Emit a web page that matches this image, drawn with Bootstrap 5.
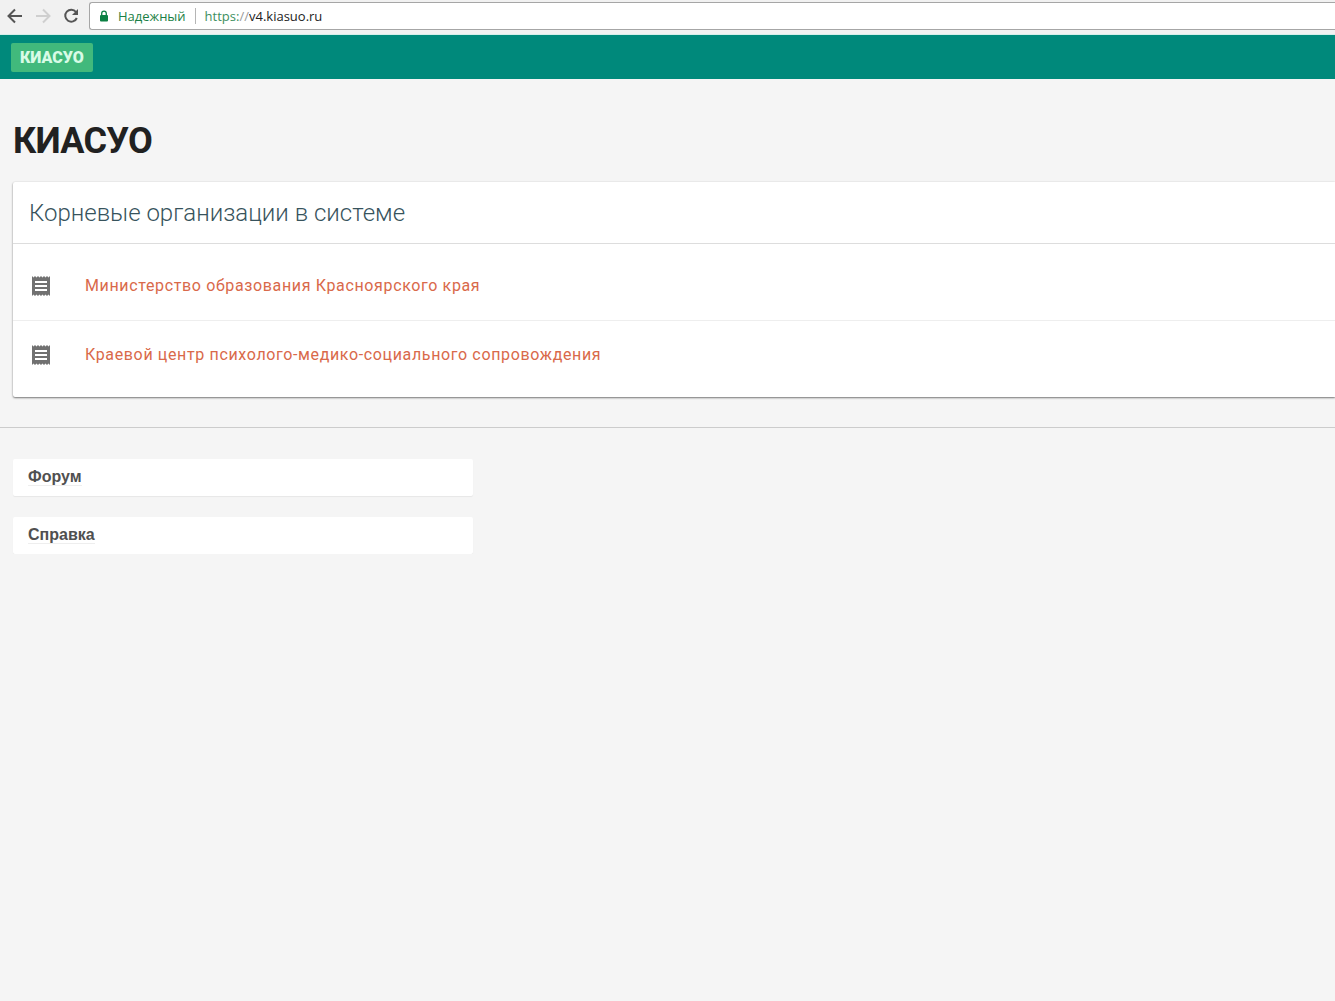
<!DOCTYPE html>
<html lang="ru">
<head>
<meta charset="utf-8">
<meta name="viewport" content="width=device-width, initial-scale=1">
<title>КИАСУО</title>
<link href="https://cdn.jsdelivr.net/npm/bootstrap@5.3.0/dist/css/bootstrap.min.css" rel="stylesheet">
<style>
body { background: #f5f5f5; color: #212121; font-family: Roboto, sans-serif; overflow-x: hidden; }
.browser-bar { background: #f1f1f1; height: 35px; padding: 2px 0 5px 6px; border-bottom: 1px solid #d5eee9; font: 13px/20px "Open Sans", sans-serif; }
.tool-group { gap: 10px; }
.tool-btn { width: 18px; height: 18px; color: #555; }
.tool-btn:disabled { color: #cfcfcf; opacity: 1; }
.tool-btn svg { display: block; }
.omnibox { height: 28px; border: 1px solid #a6a6a6; border-right: 0; border-radius: 3px 0 0 3px; background: #fff; padding-left: 9px; margin-left: 9px; }
.secure-text { color: #1a7f45; margin-left: 9px; }
.url-divider { width: 1px; height: 16px; background: #b5b5b5; margin: 0 9px; }
.url-scheme { color: #3d8f60; }
.url-slashes { color: #999; }
.url-input { color: #222; outline: 0; }
.app-bar { background: #00897b; height: 44px; padding: 0 11px; }
.brand-link { background: #41b97c; color: #d8fbe6; border-radius: 2px; padding: 5px 9px; font-size: 16px; line-height: 19px; font-weight: 900; }
.page-pad { padding-left: 13px; }
.page-title { font-size: 36px; line-height: 42px; font-weight: 700; letter-spacing: -.02em; margin: 0; padding: 41px 0 20px; }
.org-panel { border: 0; border-radius: 2px 0 0 2px; box-shadow: 0 1px 2px rgba(0,0,0,.5), 0 0 2px rgba(0,0,0,.08); }
.org-panel h2 { font-size: 24px; line-height: 29px; font-weight: 300; color: #37535c; margin: 0; padding: 17px 16px 15px; border-bottom: 1px solid #ddd; }
.org-list { padding: 8px 0; }
.org-list li { height: 69px; padding: 0 16px; gap: 32px; border-bottom: 1px solid #eee; }
.org-list li:last-child { height: 68px; border-bottom: 0; }
.org-list a { color: #d9694a; font-size: 16px; line-height: 20px; letter-spacing: .04em; }
.org-list svg { fill: #717171; }
.divider { border: 0; border-top: 1px solid #ccc; opacity: 1; margin: 30px 0 31px; }
.foot-links { max-width: 473px; gap: 21px; }
.foot-item { background: #fff; border-radius: 2px; padding: 8px 15px; height: 37px; box-shadow: 0 1px 1px rgba(0,0,0,.06); font: bold 16px/19px "Liberation Sans", Arial, sans-serif; }
.foot-item a { color: #505050; border-bottom: 1px solid #eee; }
</style>
<script src="https://cdn.jsdelivr.net/npm/bootstrap@5.3.0/dist/js/bootstrap.bundle.min.js" defer></script>
</head>
<body>
<div class="browser-bar d-flex align-items-center">
  <div class="tool-group d-flex">
    <button class="tool-btn border-0 bg-transparent p-0" type="button" aria-label="Назад"><svg width="18" height="18" viewBox="0 0 18 18" fill="none" stroke="currentColor" stroke-width="2"><path d="M16 9H3M9 2.500L2.500 9L9 15.500"/></svg></button>
    <button class="tool-btn border-0 bg-transparent p-0" type="button" aria-label="Вперед" disabled><svg width="18" height="18" viewBox="0 0 18 18" fill="none" stroke="currentColor" stroke-width="2"><path d="M2 9H15M9 2.500L15.500 9L9 15.500"/></svg></button>
    <button class="tool-btn border-0 bg-transparent p-0" type="button" aria-label="Обновить"><svg width="18" height="18" viewBox="0 0 18 18" fill="none" stroke="currentColor" stroke-width="2"><path d="M14 5A6 6 0 1 0 14.800 11"/><path d="M16 2V8H10Z" fill="currentColor" stroke="none"/></svg></button>
  </div>
  <div class="omnibox d-flex align-items-center flex-grow-1">
    <svg width="10" height="12" viewBox="0 0 10 12"><rect x="1" y="5" width="8" height="6.500" rx="1" fill="#0b8043"/><path d="M2.700 5V3.400a2.300 2.300 0 0 1 4.600 0V5" fill="none" stroke="#0b8043" stroke-width="1.300"/></svg>
    <span class="secure-text">Надежный</span>
    <span class="url-divider"></span>
    <label class="url-scheme" for="address">https:<span class="url-slashes">//</span></label>
    <input class="url-input border-0 bg-transparent p-0 flex-grow-1" id="address" type="text" value="v4.kiasuo.ru">
  </div>
</div>
<nav class="app-bar d-flex align-items-center">
  <a class="brand-link text-decoration-none" href="#">КИАСУО</a>
</nav>
<main>
  <div class="page-pad">
    <h1 class="page-title">КИАСУО</h1>
    <section class="org-panel card">
      <h2>Корневые организации в системе</h2>
      <ul class="org-list list-unstyled mb-0">
        <li class="d-flex align-items-center">
          <svg width="24" height="24" viewBox="0 0 24 24"><path d="M18 17H6v-2h12v2zm0-4H6v-2h12v2zm0-4H6V7h12v2zM3 22l1.500-1.500L6 22l1.500-1.500L9 22l1.500-1.500L12 22l1.500-1.500L15 22l1.500-1.500L18 22l1.500-1.500L21 22V2l-1.500 1.500L18 2l-1.500 1.500L15 2l-1.500 1.500L12 2l-1.500 1.500L9 2 7.500 3.500 6 2 4.500 3.500 3 2v20z"/></svg>
          <a class="text-decoration-none" href="#">Министерство образования Красноярского края</a>
        </li>
        <li class="d-flex align-items-center">
          <svg width="24" height="24" viewBox="0 0 24 24"><path d="M18 17H6v-2h12v2zm0-4H6v-2h12v2zm0-4H6V7h12v2zM3 22l1.500-1.500L6 22l1.500-1.500L9 22l1.500-1.500L12 22l1.500-1.500L15 22l1.500-1.500L18 22l1.500-1.500L21 22V2l-1.500 1.500L18 2l-1.500 1.500L15 2l-1.500 1.500L12 2l-1.500 1.500L9 2 7.500 3.500 6 2 4.500 3.500 3 2v20z"/></svg>
          <a class="text-decoration-none" href="#">Краевой центр психолого-медико-социального сопровождения</a>
        </li>
      </ul>
    </section>
  </div>
  <hr class="divider">
  <div class="foot-links page-pad d-flex flex-column">
    <div class="foot-item"><a class="text-decoration-none" href="#">Форум</a></div>
    <div class="foot-item"><a class="text-decoration-none" href="#">Справка</a></div>
  </div>
</main>
</body>
</html>
